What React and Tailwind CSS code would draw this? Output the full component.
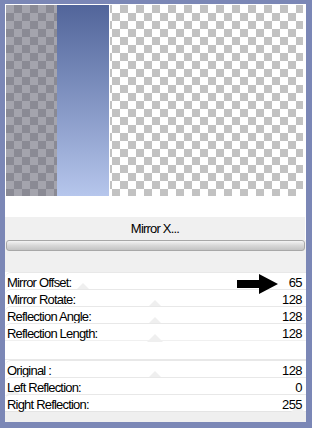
import React from "react";

const font = { fontFamily: '"Liberation Sans", Arial, sans-serif' };

function Thumb({ v }) {
  const x = 4 + (v / 255) * 290;
  return (
    <svg
      className="absolute bottom-[-2px]"
      style={{ left: Math.min(Math.max(x - 8, 0), 285) }}
      width="16"
      height="8"
      viewBox="0 0 16 8"
    >
      <path d="M0 8 L8 0 L16 8 Z" fill="#efefef" />
    </svg>
  );
}

function Row({ label, value, v }) {
  return (
    <div className="relative h-[17px] bg-white border-t border-[#e8e8e8] rounded-tl-[6px] flex items-center justify-between pt-[3px] pl-[2px] pr-[4px]">
      <Thumb v={v} />
      <span className="relative text-[13px] tracking-[-0.8px] text-black leading-none">{label}</span>
      <span className="relative text-[13px] tracking-[-0.6px] text-black leading-none">{value}</span>
    </div>
  );
}

export default function App() {
  return (
    <div style={font} className="relative w-[312px] h-[428px] bg-[#7b87b6] pt-[4px] pl-[5px] pr-[6px] pb-[6px] overflow-hidden">
      <div className="h-full bg-white flex flex-col overflow-hidden">
        <div className="h-[192px] pt-px pl-px pr-[3px] flex">
          <div className="w-[51px] h-full bg-[conic-gradient(#8a8a94_25%,#a4a4ad_0_50%,#8a8a94_0_75%,#a4a4ad_0)] bg-[length:16px_16px]" />
          <div className="w-[52px] h-full bg-gradient-to-b from-[#52659a] to-[#b6c6ec]" />
          <div className="w-px h-full bg-white" />
          <div className="flex-1 h-full bg-[conic-gradient(#c2c2c2_25%,#ffffff_0_50%,#c2c2c2_0_75%,#ffffff_0)] bg-[length:16px_16px] bg-[position:2px_0px]" />
        </div>
        <div className="h-[21px]" />
        <div className="h-[23px] bg-[#f0f0f0] mr-[1px] flex items-center justify-center text-[13px] tracking-[-0.8px] text-black">
          Mirror X...
        </div>
        <div className="h-[12px] bg-[#f0f0f0] px-px">
          <div className="h-[11px] rounded-[3px] border border-[#a8a8a8] bg-gradient-to-b from-[#f4f4f4] via-[#d8d8d8] to-[#c4c4c4]" />
        </div>
        <div className="h-[20px] bg-[#f0f0f0]" />
        <Row label="Mirror Offset:" value="65" v={65} />
        <Row label="Mirror Rotate:" value="128" v={128} />
        <Row label="Reflection Angle:" value="128" v={128} />
        <Row label="Reflection Length:" value="128" v={128} />
        <div className="h-[20px] bg-white border-t border-[#f0f0f0] border-b border-b-[#e8e8e8]" />
        <Row label="Original :" value="128" v={128} />
        <Row label="Left Reflection:" value="0" v={0} />
        <Row label="Right Reflection:" value="255" v={255} />
        <div className="flex-1 bg-[#efefef] border-t border-[#e4e4e4]" />
      </div>
      <svg className="absolute left-[237px] top-[274px]" width="42" height="20" viewBox="0 0 42 20">
        <path d="M0 6 H22 V0 L41 10 L22 20 V14 H0 Z" fill="#000" />
      </svg>
    </div>
  );
}
